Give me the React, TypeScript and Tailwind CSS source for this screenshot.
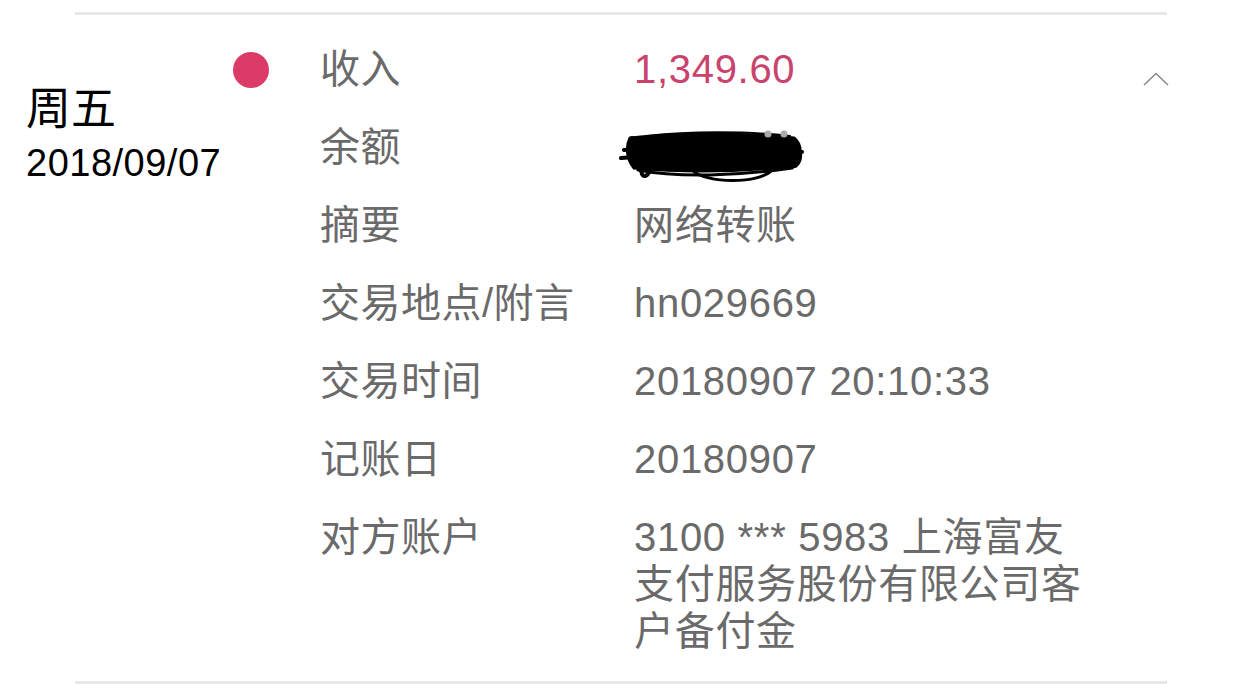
import React from "react";

const rows: { label: string; value?: string; kind?: string }[] = [
  { label: "收入", value: "1,349.60", kind: "amount" },
  { label: "余额", kind: "scribble" },
  { label: "摘要", value: "网络转账" },
  { label: "交易地点/附言", value: "hn029669" },
  { label: "交易时间", value: "20180907 20:10:33" },
  { label: "记账日", value: "20180907" },
  { label: "对方账户", value: "3100 *** 5983 上海富友支付服务股份有限公司客户备付金" },
];

function Scribble() {
  return (
    <svg width="190" height="56" viewBox="0 0 190 56" className="absolute left-[-16px] top-[4px]">
      <g fill="none" stroke="#000" strokeLinecap="round" strokeLinejoin="round">
        <path d="M12 10 C60 5 130 5 176 10 C184 16 184 30 178 38 C120 44 60 44 16 40 C8 30 8 18 12 10 Z" fill="#000" strokeWidth="3" />
        <path d="M6 22 C60 16 130 16 184 24" strokeWidth="4" />
        <path d="M3 30 C50 26 120 26 180 32" strokeWidth="4" />
        <path d="M14 10 L24 46 C26 50 30 48 32 42" strokeWidth="4" />
        <path d="M20 42 C60 50 120 48 174 40" strokeWidth="3" />
        <path d="M74 42 C88 56 142 56 154 42" strokeWidth="3" />
        <path d="M152 14 C170 10 190 20 180 36 C174 42 164 40 162 32" strokeWidth="3" />
        <path d="M30 8 C70 3 130 3 172 8" strokeWidth="2" />
      </g>
      <g fill="#aaa">
        <circle cx="150" cy="6" r="3.5" />
        <circle cx="166" cy="6" r="3.5" />
      </g>
    </svg>
  );
}

export default function App() {
  return (
    <div
      className="w-[1242px] h-[684px] bg-white overflow-hidden"
      style={{ fontFamily: '"Liberation Sans", "Noto Sans CJK SC", sans-serif' }}
    >
      <div className="pt-[12px]">
        <div className="ml-[75px] w-[1092px] h-[3px] bg-[#e8e8e8]" />
      </div>
      <div className="flex pl-[26px] pb-[26px]">
        <div className="w-[207px] pt-[69px] text-black">
          <div className="text-[45px] leading-[52px]">周五</div>
          <div className="mt-[4px] text-[38px] leading-[46px] tracking-[0.5px]">2018/09/07</div>
        </div>
        <div className="w-[87px] pt-[37px]">
          <div className="w-[36px] h-[36px] rounded-full bg-[#dc3a67]" />
        </div>
        <div className="w-[823px] shrink-0 pt-[31px] flex flex-col gap-[31px]">
          {rows.map((r) => (
            <div key={r.label} className="flex">
              <div className="w-[314px] shrink-0 text-[40px] leading-[47px] text-[#6a6a6a] tracking-[0.5px]">{r.label}</div>
              <div
                className={
                  "relative w-[456px] text-[40px] leading-[47px] tracking-[0.7px] " +
                  (r.kind === "amount" ? "text-[#c9436d]" : "text-[#6a6a6a]")
                }
              >
                {r.kind === "scribble" ? (
                  <div className="relative h-[47px]">
                    <Scribble />
                  </div>
                ) : (
                  r.value
                )}
              </div>
            </div>
          ))}
        </div>
        <div className="pt-[57px]">
          <svg width="26" height="14" viewBox="0 0 26 14">
            <path d="M1 13 L13 1.5 L25 13" fill="none" stroke="#8a8a8a" strokeWidth="1.6" />
          </svg>
        </div>
      </div>
      <div className="ml-[75px] w-[1092px] h-[3px] bg-[#e8e8e8]" />
    </div>
  );
}
